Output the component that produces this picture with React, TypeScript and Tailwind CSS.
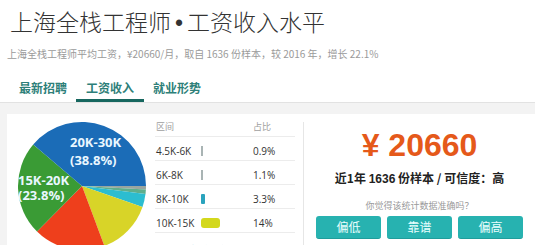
import React from 'react';

type Slice = { pct: number; color: string };

const slices: Slice[] = [
  { pct: 0.9, color: '#9aa5a0' },
  { pct: 1.1, color: '#5fae8c' },
  { pct: 3.3, color: '#2cbdd0' },
  { pct: 14, color: '#d8d428' },
  { pct: 18.1, color: '#ee3f1c' },
  { pct: 23.8, color: '#3a9b35' },
  { pct: 38.8, color: '#1b6cb7' },
];

const rows = [
  { range: '4.5K-6K', pct: '0.9%', bar: 'w-[2px] bg-[#a9b4b4]' },
  { range: '6K-8K', pct: '1.1%', bar: 'w-[2px] bg-[#a9b4b4]' },
  { range: '8K-10K', pct: '3.3%', bar: 'w-[4px] rounded-[1px] bg-[#2aa3bd]' },
  { range: '10K-15K', pct: '14%', bar: 'w-[19px] rounded-[3px] bg-[#d3d81c]' },
];

const cjk = "'Noto Sans CJK SC', 'Noto Sans', sans-serif";

const Pie = () => {
  const cx = 64;
  const cy = 64;
  const r = 64;
  let start = 0;
  const paths = slices.map((s, i) => {
    const a0 = (start / 100) * Math.PI * 2;
    start += s.pct;
    const a1 = (start / 100) * Math.PI * 2;
    const large = a1 - a0 > Math.PI ? 1 : 0;
    const d = `M${cx} ${cy} L${cx + r * Math.cos(a0)} ${cy + r * Math.sin(a0)} A${r} ${r} 0 ${large} 1 ${cx + r * Math.cos(a1)} ${cy + r * Math.sin(a1)} Z`;
    return <path key={i} d={d} fill={s.color} />;
  });

  return (
    <svg width="128" height="128" viewBox="0 0 128 128" className="shrink-0 overflow-visible">
      {paths}
      <g fill="#e9f7ff" fontFamily="'Open Sans', sans-serif" fontWeight="700" fontSize="13">
        <text x="52" y="25">20K-30K</text>
        <text x="52" y="43">(38.8%)</text>
        <text x="0" y="63">15K-20K</text>
        <text x="0" y="78">(23.8%)</text>
      </g>
    </svg>
  );
};

export default function App() {
  return (
    <div className="w-[535px] h-[245px] overflow-hidden bg-white" style={{ fontFamily: cjk }}>
      <div className="pl-[10px] pt-[5px]">
        <h1 className="text-[23px] leading-[32px] font-light text-[#333]">
          上海全栈工程师<span className="mx-[4px] font-['Liberation_Sans']">•</span>工资收入水平
        </h1>
      </div>
      <p className="pl-[7px] mt-[8px] text-[10px] leading-[14px] text-[#9a9a9a]">
        上海全栈工程师平均工资，¥20660/月，取自 1636 份样本，较 2016 年，增长 22.1%
      </p>

      <div className="mt-[13px] flex pl-[10px] border-b border-[#e2e2e2]">
        <div className="w-[66px] h-[28px] pt-[3px] flex items-center justify-center border-b-[3px] border-transparent text-[12px] font-bold text-[#2e7f79]">
          最新招聘
        </div>
        <div className="w-[68px] h-[28px] pt-[3px] flex items-center justify-center border-b-[3px] border-[#17675f] text-[12px] font-bold text-[#2e7f79]">
          工资收入
        </div>
        <div className="w-[66px] h-[28px] pt-[3px] flex items-center justify-center border-b-[3px] border-transparent text-[12px] font-bold text-[#2e7f79]">
          就业形势
        </div>
      </div>

      <div className="bg-[#f3f3f3] pt-[11px] pl-[7px]">
        <div className="bg-white flex h-[140px]">
          <div className="ml-[11px] mt-[8px]">
            <Pie />
          </div>

          <div className="ml-[9px] w-[140px] font-['Open_Sans']">
            <div className="h-[23px] pt-[3px] flex items-center border-b border-[#ececec] text-[9px] text-[#a0a0a0]" style={{ fontFamily: cjk }}>
              <span className="pl-[1px] w-[98px]">区间</span>
              <span>占比</span>
            </div>
            {rows.map((row) => (
              <div key={row.range} className="h-[24px] pt-[5px] flex items-center border-b border-[#ececec] text-[10px] text-[#333]">
                <span className="pl-[1px] w-[46px]">{row.range}</span>
                <span className="w-[52px] flex items-center">
                  <span className={`h-[10px] ${row.bar}`} />
                </span>
                <span>{row.pct}</span>
              </div>
            ))}
            <div className="mt-[9px] pl-[33px] text-[10px] text-[#6cc6d8]">查看更多</div>
          </div>

          <div className="ml-[8px] mt-[8px] w-px bg-[#e6e6e6]" />

          <div className="flex-1 flex flex-col items-center">
            <div className="mt-[13px] text-[32px] leading-[36px] font-bold text-[#e5591a] font-['Liberation_Sans']">
              ¥ 20660
            </div>
            <div className="mt-[7px] text-[12px] leading-[16px] font-bold text-[#222]">
              近1年 <span className="font-['Liberation_Sans']">1636</span> 份样本 / 可信度：高
            </div>
            <div className="mt-[13px] text-[9px] leading-[12px] text-[#9a9a9a]">你觉得该统计数据准确吗？</div>
            <div className="mt-[4px] flex gap-[6px]">
              {['偏低', '靠谱', '偏高'].map((t) => (
                <button
                  key={t}
                  className="w-[65px] h-[23px] rounded-[3px] bg-[#27b2b0] border-b border-[#1f9d9b] text-[12px] text-[#eaffff]"
                >
                  {t}
                </button>
              ))}
            </div>
          </div>
        </div>
      </div>
    </div>
  );
}
